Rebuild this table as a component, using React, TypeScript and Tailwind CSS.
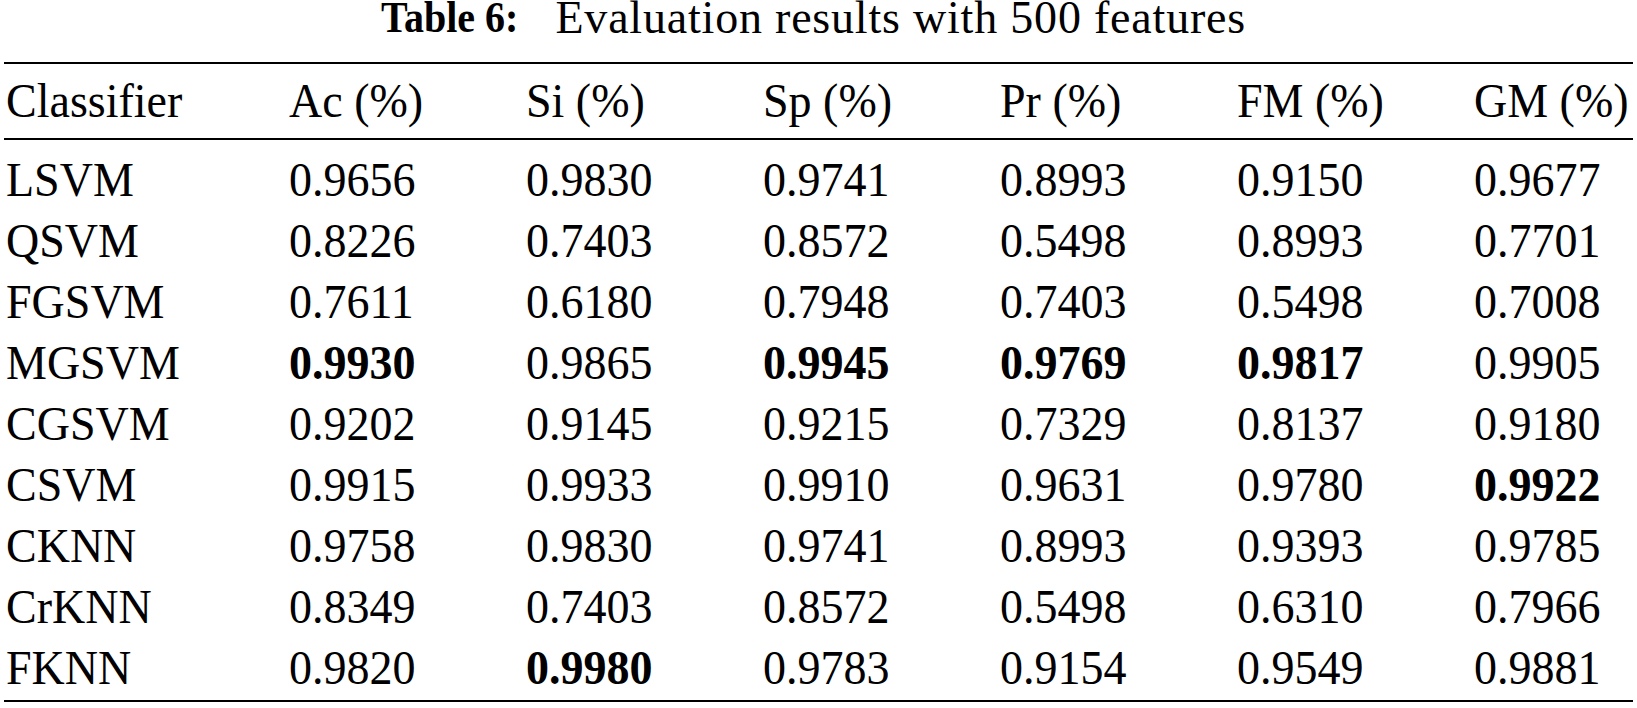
const headers = ['Classifier', 'Ac (%)', 'Si (%)', 'Sp (%)', 'Pr (%)', 'FM (%)', 'GM (%)'];

// bold marks the best value in a column
const rows: { name: string; values: string[]; bold: number[] }[] = [
  { name: 'LSVM', values: ['0.9656', '0.9830', '0.9741', '0.8993', '0.9150', '0.9677'], bold: [] },
  { name: 'QSVM', values: ['0.8226', '0.7403', '0.8572', '0.5498', '0.8993', '0.7701'], bold: [] },
  { name: 'FGSVM', values: ['0.7611', '0.6180', '0.7948', '0.7403', '0.5498', '0.7008'], bold: [] },
  { name: 'MGSVM', values: ['0.9930', '0.9865', '0.9945', '0.9769', '0.9817', '0.9905'], bold: [0, 2, 3, 4] },
  { name: 'CGSVM', values: ['0.9202', '0.9145', '0.9215', '0.7329', '0.8137', '0.9180'], bold: [] },
  { name: 'CSVM', values: ['0.9915', '0.9933', '0.9910', '0.9631', '0.9780', '0.9922'], bold: [5] },
  { name: 'CKNN', values: ['0.9758', '0.9830', '0.9741', '0.8993', '0.9393', '0.9785'], bold: [] },
  { name: 'CrKNN', values: ['0.8349', '0.7403', '0.8572', '0.5498', '0.6310', '0.7966'], bold: [] },
  { name: 'FKNN', values: ['0.9820', '0.9980', '0.9783', '0.9154', '0.9549', '0.9881'], bold: [1] },
];

const GRID = 'grid grid-cols-[283px_237px_237px_237px_237px_237px_1fr] pl-[2px]';

function Cell({ children, bold }: { children: string; bold?: boolean }) {
  return (
    <div className="whitespace-nowrap">
      <span className={`inline-block origin-[50%_46px] scale-y-[1.06] ${bold ? 'font-bold' : ''}`}>{children}</span>
    </div>
  );
}

export default function App() {
  return (
    <div className="min-h-[708px] w-[1637px] bg-white font-['Liberation_Serif','Times_New_Roman',serif] text-black">
      <div className="px-[4px]">
        <div className="flex items-baseline justify-center pr-[10px] leading-[36px]">
          <span className="inline-block origin-bottom scale-y-[1.12] text-[40px] font-bold">Table 6:</span>
          <span className="ml-[37px] inline-block text-[46px] tracking-[0.8px]">Evaluation results with 500 features</span>
        </div>

        <div className="mt-[24px] h-[2px] bg-black" />

        <div className={`${GRID} mt-[7px] text-[46px] leading-[61px]`}>
          {headers.map((h) => (
            <Cell key={h}>{h}</Cell>
          ))}
        </div>

        <div className="mt-[6px] h-[2px] bg-black" />

        <div className="pt-[10px] text-[46px] leading-[61px]">
          {rows.map((r) => (
            <div key={r.name} className={GRID}>
              <Cell>{r.name}</Cell>
              {r.values.map((v, i) => (
                <Cell key={i} bold={r.bold.includes(i)}>
                  {v}
                </Cell>
              ))}
            </div>
          ))}
        </div>

        <div className="mt-[1px] h-[2px] bg-black" />
      </div>
    </div>
  );
}
